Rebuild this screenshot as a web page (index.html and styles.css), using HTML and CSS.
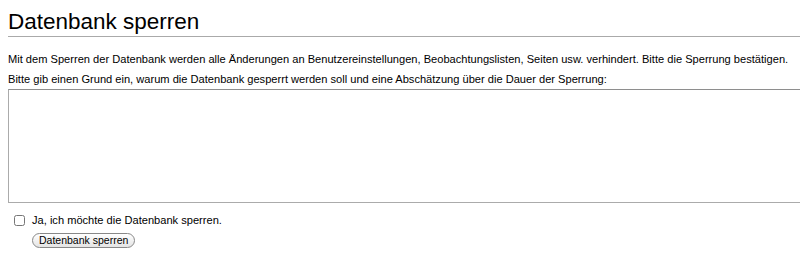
FILE: index.html
```html
<!DOCTYPE html>
<html lang="de">
<head>
  <meta charset="UTF-8">
  <title>Datenbank sperren</title>
  <link rel="stylesheet" href="styles.css">
</head>
<body>
  <div class="page">
    <h1 class="page-title">Datenbank sperren</h1>
    <p class="intro">Mit dem Sperren der Datenbank werden alle Änderungen an Benutzereinstellungen, Beobachtungslisten, Seiten usw. verhindert. Bitte die Sperrung bestätigen.</p>
    <form class="lock-form">
      <label class="reason-label" for="reason">Bitte gib einen Grund ein, warum die Datenbank gesperrt werden soll und eine Abschätzung über die Dauer der Sperrung:</label>
      <textarea id="reason" class="reason"></textarea>
      <div class="confirm">
        <input type="checkbox" id="confirm" class="confirm-box">
        <label for="confirm">Ja, ich möchte die Datenbank sperren.</label>
      </div>
      <div class="submit-row">
        <button type="submit" class="btn">Datenbank sperren</button>
      </div>
    </form>
  </div>
</body>
</html>
```

FILE: styles.css
```css
* {
  box-sizing: border-box;
}

body {
  margin: 0;
  background: #fff;
  color: #000;
  font-family: "Liberation Sans", Arial, sans-serif;
  font-size: 11.1px;
  overflow: hidden;
}

.page {
  padding: 0 0 0 8px;
}

.page-title {
  margin: 0;
  padding: 10px 0 3px;
  font-size: 22.5px;
  font-weight: normal;
  line-height: 23px;
  border-bottom: 1px solid #aaa;
}

.intro {
  margin: 12px 0 0;
  line-height: 20px;
  white-space: nowrap;
}

.lock-form {
  display: flex;
  flex-direction: column;
}

.reason-label {
  line-height: 20px;
}

.reason {
  display: block;
  width: 820px;
  height: 114px;
  margin: 0;
  border: 1px solid #ababab;
  border-top-color: #8e8e8e;
  resize: none;
}

.confirm {
  display: flex;
  align-items: center;
  gap: 7px;
  margin: 11px 0 0 6px;
  font-size: 11.1px;
}

.confirm-box {
  margin: 0;
  width: 11px;
  height: 11px;
}

.submit-row {
  margin: 7px 0 0 24px;
}

.btn {
  font-family: "Liberation Sans", Arial, sans-serif;
  font-size: 10.5px;
  padding: 0 6px;
  height: 15px;
  line-height: 13px;
  border: 1px solid #888;
  border-radius: 8px;
  background: linear-gradient(#fff, #e4e4e4);
  color: #000;
}
```
